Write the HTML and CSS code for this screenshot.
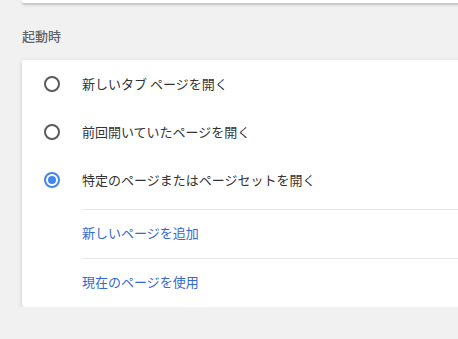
FILE: index.html
```html
<!DOCTYPE html>
<html lang="ja">
<head>
<meta charset="utf-8">
<link rel="stylesheet" href="styles.css">
</head>
<body>
<div class="page">
  <div class="card card-prev"></div>
  <h2 class="section-title">起動時</h2>
  <div class="card">
    <div class="radio-row">
      <span class="radio"></span>
      <span class="label">新しいタブ ページを開く</span>
    </div>
    <div class="radio-row">
      <span class="radio"></span>
      <span class="label">前回開いていたページを開く</span>
    </div>
    <div class="radio-row">
      <span class="radio checked"></span>
      <span class="label">特定のページまたはページセットを開く</span>
    </div>
    <div class="list">
      <div class="link-row"><a class="link">新しいページを追加</a></div>
      <div class="link-row"><a class="link">現在のページを使用</a></div>
    </div>
  </div>
</div>
</body>
</html>
```

FILE: styles.css
```css
html, body {
  margin: 0;
  padding: 0;
  background: #f1f1f1;
  overflow: hidden;
}
body {
  font-family: "Noto Sans CJK JP", "Noto Sans", sans-serif;
  font-size: 13px;
  color: #333;
}
.page {
  padding-left: 22px;
  width: 640px;
}
.card {
  background: #fff;
  box-shadow: 0 2px 2px 0 rgba(0,0,0,.14), 0 1px 5px 0 rgba(0,0,0,.12), 0 3px 1px -2px rgba(0,0,0,.2);
  border-radius: 2px;
}
.card-prev {
  height: 3px;
  border-radius: 0 0 2px 2px;
}
.section-title {
  margin: 0;
  padding: 23px 0 14px;
  font-size: 13px;
  line-height: 20px;
  font-weight: 500;
  color: #646464;
}
.radio-row {
  height: 48px;
  display: flex;
  align-items: center;
  padding-left: 22px;
}
.radio {
  box-sizing: border-box;
  width: 16px;
  height: 16px;
  border: 2px solid #5a5a5a;
  border-radius: 50%;
  margin-right: 22px;
  display: flex;
  align-items: center;
  justify-content: center;
  flex: none;
}
.radio.checked {
  border-color: #4285f4;
}
.radio.checked::after {
  content: "";
  width: 8px;
  height: 8px;
  border-radius: 50%;
  background: #4285f4;
}
.label {
  line-height: 20px;
}
.list {
  margin-top: 5px;
  margin-left: 60px;
}
.link-row {
  border-top: 1px solid #e8e8e8;
  height: 46px;
  padding-bottom: 2px;
  display: flex;
  align-items: center;
}
.link {
  color: #3367d6;
  line-height: 20px;
  text-decoration: none;
}
```
